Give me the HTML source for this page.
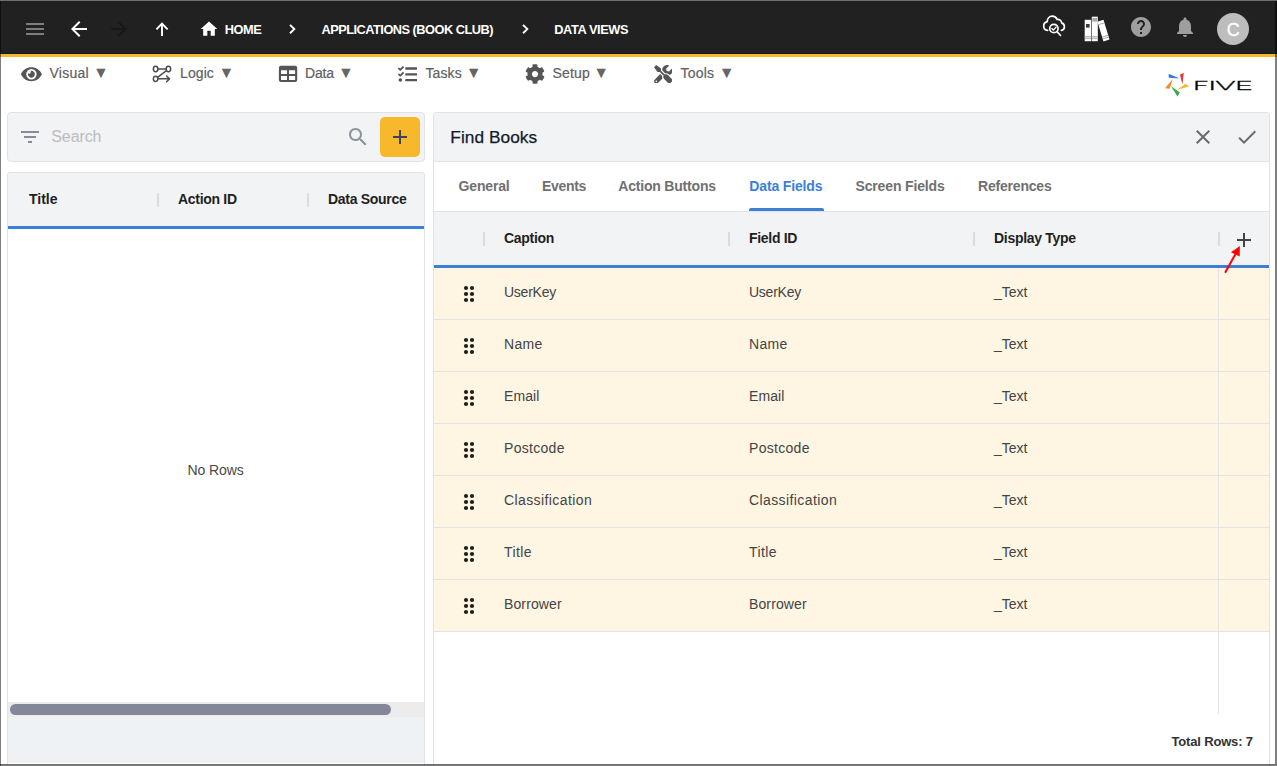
<!DOCTYPE html>
<html lang="en">
<head>
<meta charset="utf-8">
<title>Five - Data Views</title>
<style>
*{box-sizing:border-box;margin:0;padding:0}
html,body{width:1277px;height:766px;overflow:hidden;background:#fff}
body{font-family:"Liberation Sans",sans-serif;position:relative;color:#222}
.abs{position:absolute}
.t{position:absolute;white-space:nowrap;line-height:1}
#frame-top{left:0;top:0;width:1277px;height:1px;background:#6e6e6e}
#frame-left{left:0;top:1px;width:1px;height:765px;background:rgba(0,0,0,.5)}
#frame-right{left:1275px;top:1px;width:2px;height:763px;background:rgba(0,0,0,.5)}
#frame-bottom{left:0;top:764px;width:1277px;height:2px;background:linear-gradient(rgba(0,0,0,.56) 50%,rgba(0,0,0,.5) 50%)}
#topbar{left:0;top:1px;width:1277px;height:53px;background:#212121;border-bottom:1px solid #111827}
#topline{left:0;top:54px;width:1277px;height:3px;background:#f8b827}
.crumb{color:#fff;font-weight:bold;font-size:12.800px;top:23.500px}
.menu{color:#616161;font-weight:normal;font-size:14px;top:66px;-webkit-text-stroke:.2px #616161}
.tri{color:#666;font-size:16px;top:65px}
.box{background:#f2f3f5;border:1px solid #e1e2e4;border-radius:4px}
.hdr{font-weight:bold;font-size:14px;color:#1f1f1f;letter-spacing:-.3px}
.tab{font-weight:bold;font-size:14px;color:#707070;top:179px;letter-spacing:-.15px}
.row{left:434px;width:835px;height:52px;background:#fef5e3;border-bottom:1px solid #e3e3e3}
.cell{font-size:14px;color:#444}
.sep{width:2px;height:14px;background:#dcdcdc;margin-top:1px}
</style>
</head>
<body>
<!-- top bar -->
<div class="abs" id="topbar"></div>
<div class="abs" id="topline"></div>
<svg class="abs" style="left:26px;top:23px" width="18" height="12" viewBox="0 0 18 12"><path d="M0 0h18v2H0zM0 5h18v2H0zM0 10h18v2H0z" fill="#7d7d7d"/></svg>
<svg class="abs" style="left:67px;top:17px" width="24" height="24" viewBox="0 0 24 24"><path d="M20 11H7.83l5.59-5.59L12 4l-8 8 8 8 1.41-1.41L7.83 13H20v-2z" fill="#fff"/></svg>
<svg class="abs" style="left:107px;top:17px" width="24" height="24" viewBox="0 0 24 24"><path d="M12 4l-1.41 1.41L16.17 11H4v2h12.17l-5.58 5.59L12 20l8-8z" fill="#181818"/></svg>
<svg class="abs" style="left:150px;top:17px" width="24" height="24" viewBox="0 0 24 24"><path d="M6.400 12.400L12 6.700l5.600 5.700M12 6.700V19.100" fill="none" stroke="#fff" stroke-width="1.900"/></svg>
<svg class="abs" style="left:199px;top:19px" width="20" height="20" viewBox="0 0 24 24"><path d="M10 20v-6h4v6h5v-8h3L12 3 2 12h3v8z" fill="#fff"/></svg>
<div class="t crumb" style="left:224.700px;letter-spacing:-.45px">HOME</div>
<svg class="abs" style="left:282px;top:19px" width="20" height="20" viewBox="0 0 20 20"><path d="M8 5.900l4.300 4.200L8 14.300" fill="none" stroke="#fff" stroke-width="1.900"/></svg>
<div class="t crumb" style="left:321.500px;letter-spacing:-.52px">APPLICATIONS (BOOK CLUB)</div>
<svg class="abs" style="left:515px;top:19px" width="20" height="20" viewBox="0 0 20 20"><path d="M8 5.900l4.300 4.200L8 14.300" fill="none" stroke="#fff" stroke-width="1.900"/></svg>
<div class="t crumb" style="left:554.300px;letter-spacing:-.42px">DATA VIEWS</div>


<!-- top right icons -->
<svg class="abs" style="left:1040px;top:13px" width="28" height="26" viewBox="0 0 28 26" fill="none" stroke="#fff" stroke-width="1.7" stroke-linecap="round" stroke-linejoin="round">
<path d="M7.600 17.400C5.200 17.100 3.700 15.300 3.700 13c0-2.200 1.500-4 3.500-4.400C7.300 5.500 9.400 3.200 12.200 3.200c2.200 0 4.100 1.300 4.900 3.200 2.300-.300 4.300 1.300 4.600 3.500 1.600.600 2.700 2.100 2.700 3.800 0 1.800-1.200 3.300-3 3.700"/>
<circle cx="13.900" cy="15.500" r="4.200"/>
<path d="M17 18.700l3.600 3.800"/>
<path d="M11.900 15.600l1.500 1.500 2.600-3" stroke-width="1.400"/>
</svg>
<svg class="abs" style="left:1084px;top:16px" width="26" height="26" viewBox="0 0 26 26">
<rect x="0.700" y="3.800" width="6.500" height="21.400" fill="#fff"/>
<rect x="2" y="8" width="3.600" height="3.600" fill="#3a3a3a"/>
<rect x="0.700" y="20.300" width="6.500" height="1" fill="#9a9a9a"/>
<rect x="0.700" y="22.300" width="6.500" height="0.800" fill="#9a9a9a"/>
<rect x="7.800" y="0.700" width="6" height="24.500" fill="#fff"/>
<rect x="8.300" y="2" width="5" height="3.600" fill="#aaa"/>
<rect x="7.800" y="20.300" width="6" height="1" fill="#9a9a9a"/>
<rect x="7.800" y="22.300" width="6" height="0.800" fill="#9a9a9a"/>
<g transform="rotate(-17 19.500 14.500)">
<rect x="16.300" y="4.300" width="6.300" height="20.600" fill="#fff"/>
<rect x="16.300" y="7" width="6.300" height="0.900" fill="#9a9a9a"/>
<rect x="16.300" y="20" width="6.300" height="0.900" fill="#9a9a9a"/>
<rect x="16.300" y="22" width="6.300" height="0.800" fill="#9a9a9a"/>
</g>
</svg>
<svg class="abs" style="left:1129px;top:15px" width="24" height="24" viewBox="0 0 24 24"><path d="M12 2C6.480 2 2 6.480 2 12s4.480 10 10 10 10-4.480 10-10S17.520 2 12 2zm1 17h-2v-2h2v2zm2.070-7.750l-.9.920C13.450 12.900 13 13.500 13 15h-2v-.5c0-1.100.45-2.100 1.170-2.830l1.240-1.260c.370-.360.590-.860.590-1.410 0-1.100-.9-2-2-2s-2 .9-2 2H8c0-2.210 1.790-4 4-4s4 1.790 4 4c0 .880-.360 1.680-.930 2.250z" fill="#9e9e9e"/></svg>
<svg class="abs" style="left:1173px;top:15px" width="24" height="24" viewBox="0 0 24 24"><path d="M12 22c1.100 0 2-.9 2-2h-4c0 1.100.89 2 2 2zm6-6v-5c0-3.070-1.640-5.640-4.500-6.320V4c0-.830-.670-1.500-1.500-1.500s-1.500.670-1.500 1.500v.680C7.630 5.360 6 7.920 6 11v5l-2 2v1h16v-1l-2-2z" fill="#9e9e9e"/></svg>
<!-- avatar -->
<div class="abs" style="left:1217px;top:13px;width:32px;height:32px;border-radius:50%;background:#bdbdbd"></div>
<div class="t" style="left:1226.700px;top:20.600px;font-size:18px;color:#fff;-webkit-text-stroke:.3px #fff">C</div>

<!-- menu bar -->
<div class="t menu" style="left:49.500px;letter-spacing:.25px">Visual</div><div class="t tri" style="left:93px">▼</div>
<div class="t menu" style="left:180px;letter-spacing:.1px">Logic</div><div class="t tri" style="left:218.500px">▼</div>
<div class="t menu" style="left:305px;letter-spacing:-.2px">Data</div><div class="t tri" style="left:338px">▼</div>
<div class="t menu" style="left:425.500px;letter-spacing:.1px">Tasks</div><div class="t tri" style="left:465.700px">▼</div>
<div class="t menu" style="left:552.500px;letter-spacing:.15px">Setup</div><div class="t tri" style="left:593.200px">▼</div>
<div class="t menu" style="left:680.500px;letter-spacing:.2px">Tools</div><div class="t tri" style="left:718.800px">▼</div>
<svg class="abs" style="left:21.400px;top:64.600px" width="20.800" height="18.500" viewBox="0 0 576 512"><path fill="#555" d="M572.520 241.400C518.290 135.590 410.930 64 288 64S57.680 135.640 3.480 241.410a32.350 32.350 0 0 0 0 29.190C57.710 376.410 165.070 448 288 448s230.320-71.640 284.520-177.410a32.350 32.350 0 0 0 0-29.190zM288 400a144 144 0 1 1 144-144 143.930 143.930 0 0 1-144 144zm0-240a95.310 95.310 0 0 0-25.310 3.790 47.850 47.850 0 0 1-66.900 66.900A95.780 95.780 0 1 0 288 160z"/></svg>
<svg class="abs" style="left:150px;top:63px" width="24" height="22" viewBox="0 0 24 22" fill="none" stroke="#4d4d4d" stroke-width="1.500" stroke-linecap="round" stroke-linejoin="round">
<ellipse cx="5.600" cy="6.050" rx="2.250" ry="2.700"/><ellipse cx="18.400" cy="6.050" rx="2.250" ry="2.700"/><ellipse cx="5.600" cy="15.850" rx="2.250" ry="2.700"/>
<path d="M7.900 6h8.200M16.500 7.700L7.500 14.300M7.900 15.850h11.600M16.600 12.950l2.900 2.900-2.900 2.900"/>
</svg>
<svg class="abs" style="left:276px;top:63px" width="24" height="22" viewBox="276 63 24 22"><path fill="#555" fill-rule="evenodd" d="M280.900 65.850h14.300a2 2 0 0 1 2 2v12.250a2 2 0 0 1-2 2h-14.300a2 2 0 0 1-2-2v-12.250a2 2 0 0 1 2-2zM281 70.250v3.850h6v-3.850zM289 70.250v3.850h6.100v-3.850zM281 76v3.900h6v-3.900zM289 76v3.900h6.100v-3.900z"/></svg>
<svg class="abs" style="left:397.500px;top:64.800px" width="19.300" height="18.600" viewBox="0 0 512 512" preserveAspectRatio="none"><path fill="#555" d="M139.610 35.500a12 12 0 0 0-17 0L58.930 98.810l-22.700-22.120a12 12 0 0 0-17 0L3.530 92.410a12 12 0 0 0 0 17l47.590 47.400a12.780 12.780 0 0 0 17.610 0l15.590-15.620L156.520 69a12.090 12.090 0 0 0 .09-17zm0 159.190a12 12 0 0 0-17 0l-63.680 63.720-22.700-22.100a12 12 0 0 0-17 0L3.530 252a12 12 0 0 0 0 17L51 316.500a12.770 12.770 0 0 0 17.600 0l15.700-15.690 72.200-72.220a12 12 0 0 0 .09-16.900zM64 368c-26.490 0-48.590 21.500-48.590 48S37.530 464 64 464a48 48 0 0 0 0-96zm432 16H208a16 16 0 0 0-16 16v32a16 16 0 0 0 16 16h288a16 16 0 0 0 16-16v-32a16 16 0 0 0-16-16zm0-320H208a16 16 0 0 0-16 16v32a16 16 0 0 0 16 16h288a16 16 0 0 0 16-16V80a16 16 0 0 0-16-16zm0 160H208a16 16 0 0 0-16 16v32a16 16 0 0 0 16 16h288a16 16 0 0 0 16-16v-32a16 16 0 0 0-16-16z"/></svg>
<svg class="abs" style="left:524.800px;top:63.900px" width="20" height="20" viewBox="0 0 512 512"><path fill="#555" d="M487.400 315.700l-42.600-24.600c4.300-23.200 4.300-47 0-70.200l42.600-24.600c4.900-2.800 7.100-8.600 5.500-14-11.100-35.600-30-67.800-54.700-94.600-3.800-4.100-10-5.100-14.800-2.300L380.800 110c-17.900-15.400-38.500-27.300-60.800-35.100V25.800c0-5.600-3.900-10.500-9.400-11.700-36.700-8.200-74.300-7.800-109.200 0-5.500 1.200-9.400 6.100-9.400 11.700V75c-22.200 7.900-42.800 19.800-60.800 35.100L88.700 85.500c-4.900-2.800-11-1.900-14.800 2.300-24.700 26.700-43.600 58.900-54.700 94.600-1.700 5.400.6 11.200 5.500 14L67.300 221c-4.300 23.200-4.300 47 0 70.200l-42.600 24.600c-4.900 2.800-7.100 8.600-5.500 14 11.100 35.600 30 67.800 54.700 94.600 3.800 4.100 10 5.100 14.800 2.300l42.600-24.600c17.900 15.400 38.500 27.300 60.800 35.100v49.200c0 5.600 3.900 10.500 9.400 11.700 36.700 8.200 74.300 7.800 109.200 0 5.500-1.200 9.400-6.100 9.400-11.700v-49.200c22.200-7.900 42.800-19.800 60.800-35.100l42.600 24.600c4.900 2.800 11 1.900 14.800-2.300 24.700-26.700 43.600-58.900 54.700-94.600 1.500-5.500-.7-11.300-5.600-14.100zM256 336c-44.100 0-80-35.900-80-80s35.900-80 80-80 80 35.900 80 80-35.900 80-80 80z"/></svg>
<svg class="abs" style="left:653.700px;top:64.700px" width="18.600" height="18.600" viewBox="0 0 512 512"><path fill="#555" d="M501.100 395.700L384 278.600c-23.100-23.100-57.600-27.600-85.400-13.900L192 158.100V96L64 0 0 64l96 128h62.100l106.600 106.600c-13.600 27.800-9.200 62.300 13.900 85.400l117.100 117.100c14.600 14.600 38.200 14.600 52.700 0l52.700-52.700c14.500-14.600 14.500-38.200 0-52.700zM331.700 225c28.300 0 54.900 11 74.900 31l19.400 19.400c15.800-6.900 30.800-16.500 43.800-29.500 37.100-37.100 49.700-89.300 37.900-136.700-2.200-9-13.500-12.100-20.100-5.500l-74.400 74.400-67.900-11.300L334 98.900l74.400-74.400c6.600-6.600 3.400-17.900-5.700-20.200-47.400-11.700-99.600.9-136.600 37.900-28.500 28.500-41.900 66.100-41.200 103.600l82.100 82.100c8.100-1.900 16.500-2.900 24.700-2.900zm-103.900 82l-56.700-56.700L18.700 402.800c-25 25-25 65.500 0 90.500s65.500 25 90.500 0l123.600-123.600c-7.600-19.900-9.900-41.600-5-62.700zM64 472c-13.200 0-24-10.800-24-24 0-13.300 10.700-24 24-24s24 10.700 24 24c0 13.200-10.700 24-24 24z"/></svg>
<!-- logo -->
<svg class="abs" style="left:1160px;top:68px" width="34" height="32" viewBox="1160 68 34 32">
<polygon points="1168.600,73.700 1168.800,77.800 1179.600,78.400" fill="#2f7de1"/>
<polygon points="1179.900,74.700 1183.800,72.800 1182.400,84.600" fill="#e03a3a"/>
<polygon points="1185.500,83.800 1189,86.400 1177.300,89.700" fill="#f7b92b"/>
<polygon points="1170.900,86 1179.900,92.500 1177.400,96.600" fill="#3da84d"/>
<polygon points="1172.700,78.900 1165,88.300 1169.700,88.800" fill="#f78b2b"/>
</svg>
<svg class="abs" id="logotext" style="left:1190px;top:74px" width="70" height="22"><text x="0" y="15.700" transform="translate(2 0) scale(2.460 1)" style="font-family:'DejaVu Sans Light','DejaVu Sans',sans-serif;font-weight:200;font-size:12.500px;letter-spacing:-.75px;fill:#000;stroke:#000;stroke-width:.5px;vector-effect:non-scaling-stroke">FIVE</text></svg>
<!-- left: search -->
<div class="abs box" style="left:7px;top:112px;width:418px;height:50px"></div>
<div class="t" style="left:51.300px;top:129px;font-size:16px;color:#b9bcbf;letter-spacing:-.1px">Search</div>
<div class="abs" style="left:380px;top:117px;width:40px;height:40px;border-radius:5px;background:#f7b92b"></div>


<svg class="abs" style="left:18px;top:125px" width="24" height="24" viewBox="0 0 24 24"><path d="M10 18h4v-2h-4v2zM3 6v2h18V6H3zm3 7h12v-2H6v2z" fill="#848c96"/></svg>
<svg class="abs" style="left:346px;top:125px" width="24" height="24" viewBox="0 0 24 24"><path d="M15.500 14h-.79l-.28-.27C15.410 12.590 16 11.110 16 9.500 16 5.910 13.090 3 9.500 3S3 5.910 3 9.500 5.910 16 9.500 16c1.610 0 3.090-.59 4.230-1.570l.27.28v.79l5 4.990L20.490 19l-4.990-5zm-6 0C7.010 14 5 11.990 5 9.500S7.010 5 9.500 5 14 7.010 14 9.500 11.990 14 9.500 14z" fill="#8a929b"/></svg>
<svg class="abs" style="left:388px;top:125px" width="24" height="24" viewBox="0 0 24 24"><path d="M19 13h-6v6h-2v-6H5v-2h6V5h2v6h6v2z" fill="#3d4352"/></svg>
<!-- left: table -->
<div class="abs" style="left:7px;top:172px;width:418px;height:593px;border:1px solid #e1e2e4;border-bottom:none;border-radius:4px 4px 0 0;background:#fff"></div>
<div class="abs" style="left:8px;top:173px;width:416px;height:53px;background:#f2f3f5;border-radius:3px 3px 0 0"></div>
<div class="abs" style="left:8px;top:226px;width:416px;height:3px;background:#3b7fd6"></div>
<div class="t hdr" style="left:29px;top:192px;letter-spacing:0">Title</div>
<div class="abs sep" style="left:157px;top:192px"></div>
<div class="t hdr" style="left:178px;top:192px">Action ID</div>
<div class="abs sep" style="left:307px;top:192px"></div>
<div class="t hdr" style="left:328px;top:192px">Data Source</div>
<div class="t" style="left:187.500px;top:463px;font-size:14px;color:#4a4a4a;letter-spacing:-.1px">No Rows</div>
<div class="abs" style="left:8px;top:702px;width:416px;height:15px;background:#ececec"></div>
<div class="abs" style="left:10px;top:704px;width:381px;height:11px;border-radius:6px;background:#838799"></div>
<div class="abs" style="left:8px;top:717px;width:416px;height:46px;background:#eef2f4"></div>

<!-- right panel -->
<div class="abs" style="left:433px;top:112px;width:837px;height:653px;border:1px solid #e1e2e4;border-bottom:none;border-radius:4px 4px 0 0;background:#fff"></div>
<div class="abs" style="left:434px;top:113px;width:835px;height:49px;background:#f2f3f5;border-bottom:1px solid #e1e2e4;border-radius:3px 3px 0 0"></div>
<div class="t" style="left:450.300px;top:129.200px;font-size:17.300px;color:#131a2a;letter-spacing:.05px;-webkit-text-stroke:.25px #131a2a">Find Books</div>


<svg class="abs" style="left:1191px;top:125px" width="24" height="24" viewBox="0 0 24 24"><path d="M19 6.410L17.590 5 12 10.590 6.410 5 5 6.410 10.590 12 5 17.590 6.410 19 12 13.410 17.590 19 19 17.590 13.410 12z" fill="#6b6b6b"/></svg>
<svg class="abs" style="left:1235px;top:125px" width="24" height="24" viewBox="0 0 24 24"><path d="M9 16.170L4.830 12l-1.420 1.410L9 19 21 7l-1.410-1.410z" fill="#6b6b6b"/></svg>
<div class="t tab" style="left:458.500px">General</div>
<div class="t tab" style="left:542px;letter-spacing:-.3px">Events</div>
<div class="t tab" style="left:618.300px;letter-spacing:-.2px">Action Buttons</div>
<div class="t tab" style="left:749.300px;color:#3b7fd6">Data Fields</div>
<div class="t tab" style="left:855.500px">Screen Fields</div>
<div class="t tab" style="left:978px;letter-spacing:-.2px">References</div>
<div class="abs" style="left:749px;top:208px;width:75px;height:3px;background:#3b7fd6;border-radius:2px 2px 0 0"></div>
<div class="abs" style="left:434px;top:211px;width:835px;height:1px;background:#e1e2e4"></div>

<div class="abs" style="left:434px;top:212px;width:835px;height:53px;background:#f2f3f5"></div>
<div class="abs" style="left:434px;top:265px;width:835px;height:3px;background:#3b7fd6"></div>
<div class="abs sep" style="left:483px;top:231px"></div>
<div class="t hdr" style="left:504px;top:231px">Caption</div>
<div class="abs sep" style="left:728px;top:231px"></div>
<div class="t hdr" style="left:749px;top:231px">Field ID</div>
<div class="abs sep" style="left:973px;top:231px"></div>
<div class="t hdr" style="left:994px;top:231px">Display Type</div>
<div class="abs sep" style="left:1218px;top:231px"></div>


<svg class="abs" style="left:1232px;top:228px" width="24" height="24" viewBox="0 0 24 24"><path d="M19 13h-6v6h-2v-6H5v-2h6V5h2v6h6v2z" fill="#444"/></svg>
<div class="abs row" style="top:268px"></div>
<div class="abs row" style="top:320px"></div>
<div class="abs row" style="top:372px"></div>
<div class="abs row" style="top:424px"></div>
<div class="abs row" style="top:476px"></div>
<div class="abs row" style="top:528px"></div>
<div class="abs row" style="top:580px"></div>
<svg class="abs" style="left:457px;top:282px" width="24" height="24" viewBox="0 0 24 24"><g fill="#1e1e1e"><circle cx="9" cy="6" r="2.1"/><circle cx="15" cy="6" r="2.1"/><circle cx="9" cy="12" r="2.1"/><circle cx="15" cy="12" r="2.1"/><circle cx="9" cy="18" r="2.1"/><circle cx="15" cy="18" r="2.1"/></g></svg>
<div class="t cell" style="left:504px;top:285px;letter-spacing:-0.25px">UserKey</div>
<div class="t cell" style="left:749px;top:285px;letter-spacing:-0.25px">UserKey</div>
<div class="t cell" style="left:994px;top:285px">_Text</div>
<svg class="abs" style="left:457px;top:334px" width="24" height="24" viewBox="0 0 24 24"><g fill="#1e1e1e"><circle cx="9" cy="6" r="2.1"/><circle cx="15" cy="6" r="2.1"/><circle cx="9" cy="12" r="2.1"/><circle cx="15" cy="12" r="2.1"/><circle cx="9" cy="18" r="2.1"/><circle cx="15" cy="18" r="2.1"/></g></svg>
<div class="t cell" style="left:504px;top:337px;letter-spacing:0.33px">Name</div>
<div class="t cell" style="left:749px;top:337px;letter-spacing:0.33px">Name</div>
<div class="t cell" style="left:994px;top:337px">_Text</div>
<svg class="abs" style="left:457px;top:386px" width="24" height="24" viewBox="0 0 24 24"><g fill="#1e1e1e"><circle cx="9" cy="6" r="2.1"/><circle cx="15" cy="6" r="2.1"/><circle cx="9" cy="12" r="2.1"/><circle cx="15" cy="12" r="2.1"/><circle cx="9" cy="18" r="2.1"/><circle cx="15" cy="18" r="2.1"/></g></svg>
<div class="t cell" style="left:504px;top:389px;letter-spacing:0.1px">Email</div>
<div class="t cell" style="left:749px;top:389px;letter-spacing:0.1px">Email</div>
<div class="t cell" style="left:994px;top:389px">_Text</div>
<svg class="abs" style="left:457px;top:438px" width="24" height="24" viewBox="0 0 24 24"><g fill="#1e1e1e"><circle cx="9" cy="6" r="2.1"/><circle cx="15" cy="6" r="2.1"/><circle cx="9" cy="12" r="2.1"/><circle cx="15" cy="12" r="2.1"/><circle cx="9" cy="18" r="2.1"/><circle cx="15" cy="18" r="2.1"/></g></svg>
<div class="t cell" style="left:504px;top:441px;letter-spacing:0.3px">Postcode</div>
<div class="t cell" style="left:749px;top:441px;letter-spacing:0.3px">Postcode</div>
<div class="t cell" style="left:994px;top:441px">_Text</div>
<svg class="abs" style="left:457px;top:490px" width="24" height="24" viewBox="0 0 24 24"><g fill="#1e1e1e"><circle cx="9" cy="6" r="2.1"/><circle cx="15" cy="6" r="2.1"/><circle cx="9" cy="12" r="2.1"/><circle cx="15" cy="12" r="2.1"/><circle cx="9" cy="18" r="2.1"/><circle cx="15" cy="18" r="2.1"/></g></svg>
<div class="t cell" style="left:504px;top:493px;letter-spacing:0.4px">Classification</div>
<div class="t cell" style="left:749px;top:493px;letter-spacing:0.4px">Classification</div>
<div class="t cell" style="left:994px;top:493px">_Text</div>
<svg class="abs" style="left:457px;top:542px" width="24" height="24" viewBox="0 0 24 24"><g fill="#1e1e1e"><circle cx="9" cy="6" r="2.1"/><circle cx="15" cy="6" r="2.1"/><circle cx="9" cy="12" r="2.1"/><circle cx="15" cy="12" r="2.1"/><circle cx="9" cy="18" r="2.1"/><circle cx="15" cy="18" r="2.1"/></g></svg>
<div class="t cell" style="left:504px;top:545px;letter-spacing:0.4px">Title</div>
<div class="t cell" style="left:749px;top:545px;letter-spacing:0.4px">Title</div>
<div class="t cell" style="left:994px;top:545px">_Text</div>
<svg class="abs" style="left:457px;top:594px" width="24" height="24" viewBox="0 0 24 24"><g fill="#1e1e1e"><circle cx="9" cy="6" r="2.1"/><circle cx="15" cy="6" r="2.1"/><circle cx="9" cy="12" r="2.1"/><circle cx="15" cy="12" r="2.1"/><circle cx="9" cy="18" r="2.1"/><circle cx="15" cy="18" r="2.1"/></g></svg>
<div class="t cell" style="left:504px;top:597px;letter-spacing:0.12px">Borrower</div>
<div class="t cell" style="left:749px;top:597px;letter-spacing:0.12px">Borrower</div>
<div class="t cell" style="left:994px;top:597px">_Text</div>
<div class="abs" style="left:1218px;top:268px;width:1px;height:446px;background:#e3e3e3"></div>


<svg class="abs" style="left:1220px;top:242px" width="24" height="34" viewBox="1220 242 24 34"><path d="M1225.100 272.700L1235.500 254" stroke="#ff0000" stroke-width="2" fill="none"/><polygon points="1239.900,246 1231,252.300 1239.700,256.500" fill="#ff0000"/></svg>
<div class="t" style="left:1171.500px;top:734.700px;font-size:13px;font-weight:bold;color:#333;letter-spacing:-.17px">Total Rows: 7</div>

<div class="abs" id="frame-top"></div>
<div class="abs" id="frame-left"></div>
<div class="abs" id="frame-right"></div>
<div class="abs" id="frame-bottom"></div>
</body>
</html>
